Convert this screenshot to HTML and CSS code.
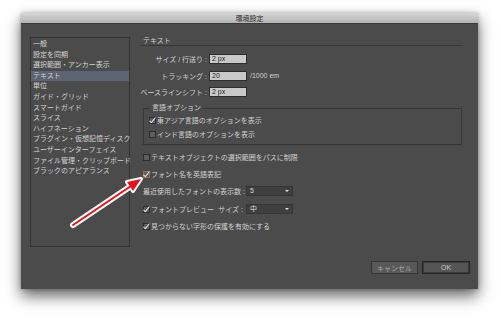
FILE: index.html
```html
<!DOCTYPE html>
<html lang="ja">
<head>
    <meta charset="UTF-8">
    <title>環境設定</title>
    <link rel="stylesheet" href="styles.css">
</head>
<body>
    <div class="dialog">
        <div class="titlebar">環境設定</div>
        <div class="dialog-body">
            <div class="main">
                <ul class="category-list">
                    <li>一般</li>
                    <li>設定を同期</li>
                    <li>選択範囲・アンカー表示</li>
                    <li class="selected">テキスト</li>
                    <li>単位</li>
                    <li>ガイド・グリッド</li>
                    <li>スマートガイド</li>
                    <li>スライス</li>
                    <li>ハイフネーション</li>
                    <li>プラグイン・仮想記憶ディスク</li>
                    <li>ユーザーインターフェイス</li>
                    <li>ファイル管理・クリップボード</li>
                    <li>ブラックのアピアランス</li>
                </ul>

                <div class="panel">
                    <div class="panel-title">テキスト</div>

                    <div class="field-row first">
                        <span class="field-label">サイズ / 行送り :</span>
                        <span class="input">2 px</span>
                    </div>
                    <div class="field-row">
                        <span class="field-label">トラッキング :</span>
                        <span class="input">20</span>
                        <span class="unit">/1000 em</span>
                    </div>
                    <div class="field-row">
                        <span class="field-label">ベースラインシフト :</span>
                        <span class="input">2 px</span>
                    </div>

                    <fieldset class="group">
                        <legend>言語オプション</legend>
                        <div class="check-row">
                            <span class="checkbox checked"></span>東アジア言語のオプションを表示
                        </div>
                        <div class="check-row">
                            <span class="checkbox"></span>インド言語のオプションを表示
                        </div>
                    </fieldset>

                    <div class="check-row option">
                        <span class="checkbox"></span>テキストオブジェクトの選択範囲をパスに制限
                    </div>
                    <div class="check-row option">
                        <span class="checkbox checked focused"></span>フォント名を英語表記
                    </div>
                    <div class="select-row">
                        <span class="select-label">最近使用したフォントの表示数 :</span>
                        <span class="select">5</span>
                    </div>
                    <div class="select-row">
                        <span class="select-label split">
                            <span class="check-row"><span class="checkbox checked"></span>フォントプレビュー</span>
                            <span>サイズ :</span>
                        </span>
                        <span class="select">中</span>
                    </div>
                    <div class="check-row option">
                        <span class="checkbox checked"></span>見つからない字形の保護を有効にする
                    </div>
                </div>
            </div>

            <div class="footer">
                <button class="btn">キャンセル</button>
                <button class="btn default">OK</button>
            </div>
        </div>
    </div>

    <svg class="pointer" width="500" height="319" viewBox="0 0 500 319">
        <line x1="73" y1="225" x2="131" y2="186" stroke="#fff" stroke-width="6" stroke-linecap="round"/>
        <polygon points="141,179 127,182 133,191" fill="#fff" stroke="#fff" stroke-width="4" stroke-linejoin="round"/>
        <line x1="73" y1="225" x2="131" y2="186" stroke="#e8101a" stroke-width="2" stroke-linecap="round"/>
        <polygon points="141,179 127,182 133,191" fill="#e8101a"/>
    </svg>
</body>
</html>
```

FILE: styles.css
```css
body, html {
    margin: 0;
    background-color: #ffffff;
    font-family: "Liberation Sans", "Noto Sans CJK JP", sans-serif;
    font-size: 7px;
    color: #d2d2d2;
}

body {
    position: relative;
    width: 500px;
    height: 319px;
    overflow: hidden;
}

.dialog {
    margin: 13px 0 0 21px;
    width: 457px;
    height: 276px;
    display: flex;
    flex-direction: column;
    box-shadow: 0 7px 14px rgba(0, 0, 0, 0.6), 0 0 4px rgba(0, 0, 0, 0.25);
}

.titlebar {
    height: 11px;
    line-height: 11px;
    text-align: center;
    color: #2a2a2a;
    background: linear-gradient(#d6d6d6, #b3b3b3);
    border-bottom: 1px solid #3a3a3a;
    box-sizing: border-box;
}

.dialog-body {
    flex: 1;
    display: flex;
    flex-direction: column;
    background-color: #4b4b4b;
    padding: 13px 8px 15px 9px;
}

.main {
    display: flex;
}

/* category list */
.category-list {
    list-style: none;
    margin: 0;
    padding: 1px 0 0;
    width: 100px;
    height: 210px;
    box-sizing: border-box;
    border: 1px solid #323232;
}

.category-list li {
    height: 10.6px;
    line-height: 10.6px;
    padding-left: 2px;
    white-space: nowrap;
}

.category-list li.selected {
    background-color: #5c6474;
}

/* right panel */
.panel {
    margin-left: 10px;
    width: 323px;
}

.panel-title {
    line-height: 8px;
    padding-left: 3px;
    border-bottom: 1px solid #383838;
}

.field-row {
    display: flex;
    align-items: center;
    height: 10px;
    margin-top: 6.5px;
}

.field-row.first {
    margin-top: 8px;
}

.field-label {
    width: 67px;
    text-align: right;
    padding-right: 2px;
    white-space: nowrap;
}

.input {
    width: 38px;
    height: 10px;
    box-sizing: border-box;
    padding-left: 2px;
    background-color: #c9c9c9;
    border: 1px solid #2e2e2e;
    color: #1e1e1e;
    line-height: 8px;
}

.unit {
    margin-left: 3px;
}

.group {
    margin: 7px 1px 0 3px;
    padding: 3px 0 5px 5px;
    border: 1px solid #363636;
}

.group legend {
    line-height: 8px;
    padding: 0 2px;
    margin-left: 1px;
}

.group .check-row + .check-row {
    margin-top: 4px;
}

.check-row {
    display: flex;
    align-items: center;
    height: 10px;
    white-space: nowrap;
}

.option {
    padding-left: 3px;
    margin-top: 7px;
}

.checkbox {
    width: 7px;
    height: 7px;
    box-sizing: border-box;
    margin-right: 1px;
    border: 1px solid #2c2c2c;
    background-color: #5e5e5e;
    position: relative;
}

.checkbox.checked::after {
    content: "";
    position: absolute;
    left: 1px;
    top: -2px;
    width: 2px;
    height: 6px;
    border-right: 1px solid #e6e6e6;
    border-bottom: 1px solid #e6e6e6;
    transform: rotate(40deg);
}

.checkbox.focused {
    border-color: #b06a34;
}

.select-row {
    display: flex;
    align-items: center;
    height: 10px;
    padding-left: 3px;
    margin-top: 7px;
}

.select-row + .select-row {
    margin-top: 8px;
}

.select-label {
    width: 100px;
    white-space: nowrap;
}

.select-label.split {
    display: flex;
    justify-content: space-between;
}

.select {
    margin-left: 3px;
    width: 47px;
    height: 10px;
    line-height: 8px;
    box-sizing: border-box;
    padding-left: 3px;
    border: 1px solid #353535;
    background-color: #3f3f3f;
    color: #dcdcdc;
    position: relative;
}

.select::after {
    content: "";
    position: absolute;
    right: 3px;
    top: 3px;
    border-left: 2px solid transparent;
    border-right: 2px solid transparent;
    border-top: 2px solid #e0e0e0;
}

/* buttons */
.footer {
    display: flex;
    justify-content: flex-end;
    gap: 4px;
    margin-top: 14px;
}

.btn {
    width: 47px;
    height: 13px;
    padding: 0;
    font-family: inherit;
    font-size: 7px;
    color: #a8a8a8;
    background-color: #585858;
    border: 1px solid #353535;
}

.btn.default {
    width: 48px;
    color: #c4c4c4;
    background-color: #555555;
    border: 1px solid #262626;
    box-shadow: inset 0 0 0 1px #3a3a3a;
}

.pointer {
    position: absolute;
    top: 0;
    left: 0;
    pointer-events: none;
}
```
